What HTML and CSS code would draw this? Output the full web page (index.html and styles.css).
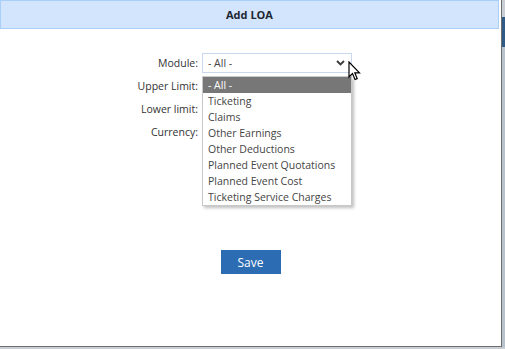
FILE: index.html
```html
<!DOCTYPE html>
<html lang="en">
<head>
    <meta charset="UTF-8">
    <meta name="viewport" content="width=device-width, initial-scale=1.0">
    <title>Add LOA</title>
    <link rel="stylesheet" href="styles.css">
</head>
<body>

<div class="dialog">
    <div class="dialog-title">Add LOA</div>

    <div class="form-grid">
        <label class="form-label">Module:</label>
        <div class="field">
            <div class="select-box">
                <span>- All -</span>
                <svg class="chevron" width="9" height="6" viewBox="0 0 9 6"><path d="M1 1 L4.5 4.5 L8 1" fill="none" stroke="#3a3a3a" stroke-width="1.8"/></svg>
            </div>
            <ul class="options">
                <li class="selected">- All -</li>
                <li>Ticketing</li>
                <li>Claims</li>
                <li>Other Earnings</li>
                <li>Other Deductions</li>
                <li>Planned Event Quotations</li>
                <li>Planned Event Cost</li>
                <li>Ticketing Service Charges</li>
            </ul>
            <svg class="cursor" width="14" height="21" viewBox="0 0 14 21"><path d="M1 1 L1 16 L4.5 12.5 L7 18.5 L9.2 17.6 L6.8 11.8 L11.5 11.8 Z" fill="#fff" stroke="#000" stroke-width="1.2" stroke-linejoin="miter"/></svg>
        </div>

        <label class="form-label">Upper Limit:</label>
        <div class="field"><input type="text" class="text-input"></div>

        <label class="form-label">Lower limit:</label>
        <div class="field"><input type="text" class="text-input"></div>

        <label class="form-label">Currency:</label>
        <div class="field"><input type="text" class="text-input"></div>
    </div>

    <div class="actions">
        <button class="save-btn">Save</button>
    </div>
</div>

</body>
</html>
```

FILE: styles.css
```css
body {
    margin: 0;
    padding: 0;
    background: linear-gradient(#c9ced4 0, #c9ced4 17px, #2f5b86 17px, #2f5b86 47px, #b8c2cc 47px);
    font-family: 'Open Sans', sans-serif;
    font-size: 10.5px;
    color: #333;
}
.dialog {
    width: 502px;
    height: 347px;
    background: white;
    border-right: 1px solid #6e6e6e;
    border-bottom: 1px solid #6e6e6e;
    box-sizing: border-box;
}
.dialog-title {
    width: 499px;
    height: 29px;
    box-sizing: border-box;
    background: #d2e5fc;
    border: 1px solid #a9cff9;
    font-weight: bold;
    font-size: 11px;
    color: #1d2733;
    display: flex;
    align-items: center;
    justify-content: center;
}
.form-grid {
    display: grid;
    grid-template-columns: 198px 150px;
    grid-auto-rows: 23px;
    column-gap: 4px;
    margin-top: 22px;
}
.form-label {
    text-align: right;
    align-self: center;
    color: #333;
}
.field {
    position: relative;
    display: flex;
    align-items: center;
}
.select-box {
    width: 150px;
    height: 20px;
    box-sizing: border-box;
    border: 1px solid #c9d7ef;
    display: flex;
    align-items: center;
    justify-content: space-between;
    padding: 0 6px 0 5px;
    color: #444;
}
.chevron {
    margin-top: 1px;
}
.text-input {
    width: 150px;
    height: 20px;
    box-sizing: border-box;
    border: 1px solid #ccc;
}
.options {
    position: absolute;
    top: 26px;
    left: 0;
    width: 150px;
    margin: 0;
    padding: 0;
    list-style: none;
    background: white;
    border: 1px solid #c8c8c8;
    border-top: none;
    box-sizing: border-box;
    box-shadow: 2px 2px 3px rgba(0, 0, 0, 0.25);
    z-index: 2;
}
.options li {
    height: 16px;
    line-height: 16px;
    padding-left: 5px;
    color: #444;
}
.options li.selected {
    background: #777;
    color: white;
}
.cursor {
    position: absolute;
    left: 146px;
    top: 10px;
    z-index: 3;
}
.actions {
    display: flex;
    justify-content: center;
    margin-top: 107px;
}
.save-btn {
    width: 60px;
    height: 24px;
    background: #2b6cb3;
    color: white;
    border: none;
    font-family: 'Open Sans', sans-serif;
    font-size: 12px;
}
```
